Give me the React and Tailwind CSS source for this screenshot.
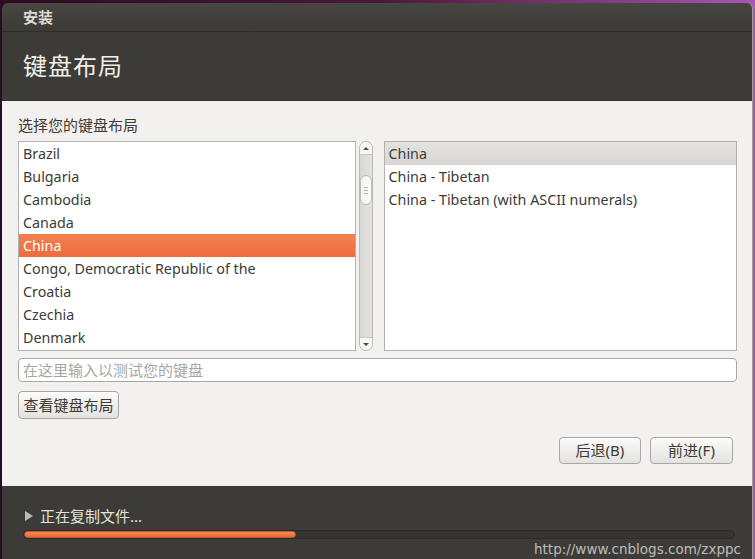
import React from 'react';

const FONT = { fontFamily: '"Noto Sans", "Noto Sans CJK SC", sans-serif' };

const layouts = [
  'Brazil',
  'Bulgaria',
  'Cambodia',
  'Canada',
  'China',
  'Congo, Democratic Republic of the',
  'Croatia',
  'Czechia',
  'Denmark',
];

const variants = ['China', 'China - Tibetan', 'China - Tibetan (with ASCII numerals)'];

const Scrollbar = () => (
  <div className="w-[14px] h-full rounded-full border border-[#bcbab6] bg-gradient-to-r from-[#d9d7d3] to-[#e4e2de] flex flex-col items-center">
    <div className="w-full h-[13px] rounded-t-full bg-[#f7f6f5] border-b border-[#c9c7c3] flex items-center justify-center">
      <div className="w-0 h-0 border-l-[3px] border-r-[3px] border-b-[3px] border-l-transparent border-r-transparent border-b-[#4a4a4a]" />
    </div>
    <div className="mt-[20px] w-full h-[30px] rounded-full bg-gradient-to-r from-[#f4f3f1] to-[#fbfbfa] border border-[#bcbab6] flex flex-col items-center justify-center gap-[2px]">
      <div className="w-[4px] h-px bg-[#b5b3af]" />
      <div className="w-[4px] h-px bg-[#b5b3af]" />
      <div className="w-[4px] h-px bg-[#b5b3af]" />
    </div>
    <div className="flex-1" />
    <div className="w-full h-[13px] rounded-b-full bg-[#f7f6f5] border-t border-[#c9c7c3] flex items-center justify-center">
      <div className="w-0 h-0 border-l-[3px] border-r-[3px] border-t-[3px] border-l-transparent border-r-transparent border-t-[#4a4a4a]" />
    </div>
  </div>
);

const Btn = ({ children, className = '' }) => (
  <div
    className={`flex items-center justify-center rounded-[4px] border border-[#a9a7a3] bg-gradient-to-b from-[#fbfbfa] to-[#e4e2de] text-[15px] text-[#3c3b37] shadow-[inset_0_1px_0_#ffffff] ${className}`}
  >
    {children}
  </div>
);

export default function App() {
  return (
    <div
      className="relative w-[755px] h-[559px] overflow-hidden bg-gradient-to-r from-[#2b0b20] via-[#4a1838] to-[#a857b4]"
      style={FONT}
    >
      <div className="ml-[2px] mt-[3px] w-[751px] h-[556px] flex flex-col rounded-t-[6px] overflow-hidden border-r border-[#9e9c98]">
        {/* title bar */}
        <div className="h-[29px] shrink-0 bg-gradient-to-b from-[#474641] to-[#3c3b37] border-b border-[#2e2d2a] flex items-center pl-[21px]">
          <span className="text-[15px] font-bold text-[#dfdbd2] leading-none">安装</span>
        </div>
        {/* header */}
        <div className="h-[69px] shrink-0 bg-[#3c3b37] flex items-center pl-[21px] border-b border-[#35342f]">
          <span className="text-[24px] text-[#f2efe9] leading-none tracking-[1px]">键盘布局</span>
        </div>
        {/* body */}
        <div className="flex-1 bg-[#f2f1f0] pl-[16px] pr-[15px] pt-[15px]">
          <div className="text-[15px] leading-[19px] text-[#3c3b37] mb-[6px]">选择您的键盘布局</div>
          <div className="flex h-[210px]">
            <div className="w-[339px] h-full bg-white border border-[#b3b1ad] overflow-hidden">
              {layouts.map((l) => (
                <div
                  key={l}
                  className={`h-[23px] flex items-center pl-[4px] text-[14.3px] ${
                    l === 'China' ? 'bg-gradient-to-b from-[#f2804f] to-[#ec6c3c] text-white' : 'text-[#3c3b37]'
                  }`}
                >
                  {l}
                </div>
              ))}
            </div>
            <div className="ml-[3px] h-full">
              <Scrollbar />
            </div>
            <div className="ml-[11px] w-[355px] h-full bg-white border border-[#b3b1ad] overflow-hidden">
              {variants.map((v, i) => (
                <div
                  key={v}
                  className={`h-[23px] flex items-center pl-[4px] text-[14.3px] text-[#3c3b37] ${
                    i === 0 ? 'bg-gradient-to-b from-[#e4e2df] to-[#d8d6d2]' : ''
                  }`}
                >
                  {v}
                </div>
              ))}
            </div>
          </div>
          <div className="mt-[7px] w-[719px] h-[24px] rounded-[4px] border border-[#a9a7a3] bg-white flex items-center pl-[4px] text-[15px] text-[#a8a6a2]">
            在这里输入以测试您的键盘
          </div>
          <Btn className="mt-[9px] w-[101px] h-[28px]">查看键盘布局</Btn>
          <div className="mt-[18px] flex justify-end gap-[9px] pr-[4px]">
            <Btn className="w-[82px] h-[27px]">后退(B)</Btn>
            <Btn className="w-[83px] h-[27px]">前进(F)</Btn>
          </div>
        </div>
        {/* footer */}
        <div className="h-[73px] shrink-0 bg-[#3c3b37] pl-[21px] pr-[17px] pt-[20px]">
          <div className="flex items-center h-[20px] pl-[2px]">
            <div className="w-0 h-0 border-t-[5px] border-b-[5px] border-l-[8px] border-t-transparent border-b-transparent border-l-[#bdbab4]" />
            <span className="ml-[7px] text-[15px] text-[#e6e2da] leading-none">正在复制文件...</span>
          </div>
          <div className="mt-[4px] h-[9px] rounded-full bg-[#35342f] border border-[#2c2b28] overflow-hidden">
            <div className="h-full w-[272px] rounded-full bg-gradient-to-b from-[#f58a5a] to-[#e86a38] border border-[#c45a2e]" />
          </div>
        </div>
      </div>
      <div
        className="absolute right-[14px] bottom-[2px] text-[13.5px] text-[#bdbdbd] leading-[16px]"
        style={{ fontFamily: '"DejaVu Sans", sans-serif' }}
      >
        http://www.cnblogs.com/zxppc
      </div>
    </div>
  );
}
